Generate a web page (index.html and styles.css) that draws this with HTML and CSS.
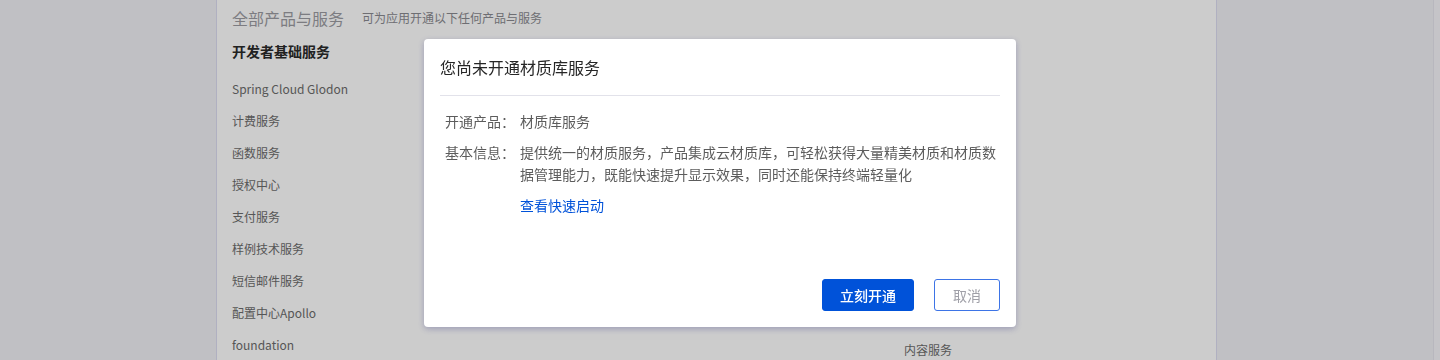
FILE: index.html
```html
<!DOCTYPE html>
<html lang="zh-CN">

<head>
    <meta charset="utf-8">
    <meta name="viewport" content="width=device-width, initial-scale=1.0">
    <title>全部产品与服务</title>
    <link rel="stylesheet" href="styles.css">
</head>

<body>
    <div class="side"></div>

    <main class="produkter">
        <div class="overskrift">
            <h1>全部产品与服务</h1>
            <p>可为应用开通以下任何产品与服务</p>
        </div>

        <div class="kolonner">
            <section class="kolonne">
                <div class="gruppe">
                    <h2>开发者基础服务</h2>
                    <ul>
                        <li>Spring Cloud Glodon</li>
                        <li>计费服务</li>
                        <li>函数服务</li>
                        <li>授权中心</li>
                        <li>支付服务</li>
                        <li>样例技术服务</li>
                        <li>短信邮件服务</li>
                        <li>配置中心Apollo</li>
                        <li>foundation</li>
                    </ul>
                </div>
            </section>

            <section class="kolonne">
                <div class="gruppe">
                    <h2>图形引擎服务</h2>
                    <ul>
                        <li>材质库服务</li>
                        <li>模型轻量化</li>
                    </ul>
                </div>
            </section>

            <section class="kolonne">
                <div class="gruppe">
                    <h2>数据服务</h2>
                    <ul>
                        <li>数据中台</li>
                        <li>文件存储</li>
                    </ul>
                </div>
                <div class="gruppe sidst">
                    <ul>
                        <li>内容服务</li>
                    </ul>
                </div>
            </section>
        </div>
    </main>

    <div class="side"></div>
    <div class="rullebjaelke"></div>

    <!-- maske over hele siden mens dialogen er åben -->
    <div class="maske"></div>

    <div class="dialog">
        <div class="dialog-top">
            <h3>您尚未开通材质库服务</h3>
        </div>

        <div class="dialog-indhold">
            <div class="raekke">
                <span class="etiket">开通产品：</span>
                <span class="vaerdi">材质库服务</span>
            </div>
            <div class="raekke">
                <span class="etiket">基本信息：</span>
                <span class="vaerdi">提供统一的材质服务，产品集成云材质库，可轻松获得大量精美材质和材质数据管理能力，既能快速提升显示效果，同时还能保持终端轻量化</span>
            </div>
            <div class="raekke">
                <span class="etiket"></span>
                <a class="vaerdi link" href="#">查看快速启动</a>
            </div>
        </div>

        <div class="dialog-bund">
            <button class="primaer">立刻开通</button>
            <button class="annuller">取消</button>
        </div>
    </div>
</body>

</html>
```

FILE: styles.css
```css
* {
    box-sizing: border-box;
}

body {
    margin: 0;
    height: 360px;
    overflow: hidden;
    display: flex;
    font-family: "Noto Sans CJK SC", "Liberation Sans", sans-serif;
    background-color: #f1f0f6;
}

.side {
    width: 216px;
    flex: none;
}

.rullebjaelke {
    width: 8px;
    flex: none;
    background-color: #f7f6fb;
    border-left: 1px solid #e6e5ee;
}

.produkter {
    width: 1001px;
    flex: none;
    background-color: #fff;
    border-left: 1px solid #dcdcf2;
    border-right: 1px solid #dcdcf2;
    padding: 6px 0 0 15px;
}

.overskrift {
    display: flex;
    align-items: center;
}

.overskrift h1 {
    margin: 0;
    font-size: 16px;
    line-height: 24px;
    font-weight: normal;
    color: #9c9ca2;
}

.overskrift p {
    margin: 0 0 0 18px;
    font-size: 12px;
    line-height: 24px;
    color: #8a8a90;
}

.kolonner {
    display: grid;
    grid-template-columns: repeat(3, 336px);
    margin-top: 10px;
}

.gruppe h2 {
    margin: 0 0 11px;
    font-size: 14px;
    line-height: 22px;
    font-weight: bold;
    color: #2a2a2a;
}

.gruppe ul {
    list-style: none;
    margin: 0;
    padding: 0;
}

.gruppe li {
    font-size: 12px;
    line-height: 32px;
    color: #6c6c6c;
    white-space: nowrap;
}

/* sidste gruppe i kolonnen starter længere nede */
.sidst {
    margin-top: 197px;
}

.maske {
    position: fixed;
    inset: 0;
    background-color: rgba(0, 0, 0, 0.2);
}

.dialog {
    position: fixed;
    top: 39px;
    left: 50%;
    margin-left: -296px;
    width: 592px;
    height: 288px;
    display: flex;
    flex-direction: column;
    padding: 0 16px 16px;
    background-color: #fff;
    border-radius: 4px;
    box-shadow: 0 2px 6px rgba(70, 70, 140, 0.35);
}

.dialog-top {
    padding: 16px 0 16px;
    border-bottom: 1px solid #e2e2ea;
}

.dialog-top h3 {
    margin: 0;
    font-size: 16px;
    line-height: 24px;
    font-weight: normal;
    color: #262626;
}

.dialog-indhold {
    padding-top: 14px;
}

.raekke {
    display: flex;
    padding-left: 5px;
    margin-bottom: 9px;
    font-size: 14px;
    line-height: 22px;
    color: #5c5c5c;
}

.etiket {
    width: 75px;
    flex: none;
}

.vaerdi {
    flex: 1;
}

.link {
    flex: none;
    color: #0052d9;
    text-decoration: none;
}

.dialog-bund {
    margin-top: auto;
    display: flex;
    justify-content: flex-end;
    gap: 20px;
}

.dialog-bund button {
    height: 32px;
    font-family: inherit;
    font-size: 14px;
    border-radius: 3px;
    padding: 0;
    cursor: pointer;
}

.primaer {
    width: 92px;
    background-color: #0052d9;
    border: 1px solid #0052d9;
    color: #fff;
    font-weight: 500;
}

.annuller {
    width: 66px;
    background-color: #fff;
    border: 1px solid #3d74e6;
    color: #a0a0a8;
}
```
